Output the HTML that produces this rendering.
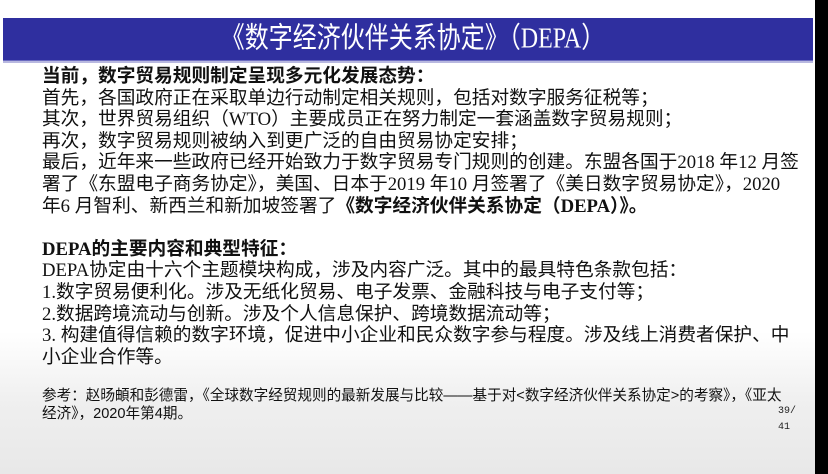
<!DOCTYPE html>
<html><head><meta charset="utf-8"><style>
html,body{margin:0;padding:0;}
body{width:828px;height:474px;position:relative;overflow:hidden;background:#000;}
#slide{position:absolute;left:0;top:0;width:815px;height:474px;background:linear-gradient(#ffffff 0%,#ffffff 70%,#efefef 85%,#e8e8e8 100%);}
#bar{position:absolute;left:3px;top:18px;width:810px;height:42px;background:#2f2f9f;box-shadow:0 1px 0 #6b6bc0,0 3px 0 #b8b8e0;}
#title{position:absolute;left:0;top:18px;width:826px;height:42px;text-align:center;color:#fff;font:24px/42px "Liberation Serif","Noto Sans CJK SC",serif;transform:scaleY(1.2);}
.l{position:absolute;left:42px;white-space:nowrap;font-family:"Liberation Serif","Noto Sans CJK SC",serif;font-size:18.7px;line-height:22px;color:#111;}
.b{font-weight:bold;}
.f{position:absolute;left:42px;white-space:nowrap;font-family:"Liberation Sans","Noto Sans CJK SC",sans-serif;font-size:14.6px;line-height:17px;color:#111;}
.pn{position:absolute;left:778px;font:10px/12px "Liberation Mono",monospace;color:#222;}
</style></head><body>
<div id="slide">
<div id="bar"></div>
<div id="title">《数字经济伙伴关系协定》（DEPA）</div>
<div class="l b" style="top:66px">当前，数字贸易规则制定呈现多元化发展态势：</div>
<div class="l" style="top:87.6px">首先，各国政府正在采取单边行动制定相关规则，包括对数字服务征税等；</div>
<div class="l" style="top:109.2px">其次，世界贸易组织（WTO）主要成员正在努力制定一套涵盖数字贸易规则；</div>
<div class="l" style="top:130.8px">再次，数字贸易规则被纳入到更广泛的自由贸易协定安排；</div>
<div class="l" style="top:152.4px">最后，近年来一些政府已经开始致力于数字贸易专门规则的创建。东盟各国于2018 年12 月签</div>
<div class="l" style="top:174px">署了《东盟电子商务协定》，美国、日本于2019 年10 月签署了《美日数字贸易协定》，2020</div>
<div class="l" style="top:195.6px">年6 月智利、新西兰和新加坡签署了<b>《数字经济伙伴关系协定（DEPA）》。</b></div>
<div class="l b" style="top:238.8px">DEPA的主要内容和典型特征：</div>
<div class="l" style="top:260.4px">DEPA协定由十六个主题模块构成，涉及内容广泛。其中的最具特色条款包括：</div>
<div class="l" style="top:282px">1.数字贸易便利化。涉及无纸化贸易、电子发票、金融科技与电子支付等；</div>
<div class="l" style="top:303.6px">2.数据跨境流动与创新。涉及个人信息保护、跨境数据流动等；</div>
<div class="l" style="top:325.2px">3. 构建值得信赖的数字环境，促进中小企业和民众数字参与程度。涉及线上消费者保护、中</div>
<div class="l" style="top:346.8px">小企业合作等。</div>
<div class="f" style="top:388px">参考：赵旸頔和彭德雷，《全球数字经贸规则的最新发展与比较——基于对&lt;数字经济伙伴关系协定&gt;的考察》，《亚太</div>
<div class="f" style="top:406px">经济》，2020年第4期。</div>
<div class="pn" style="top:406px">39/</div>
<div class="pn" style="top:422px">41</div>
</div>
</body></html>
